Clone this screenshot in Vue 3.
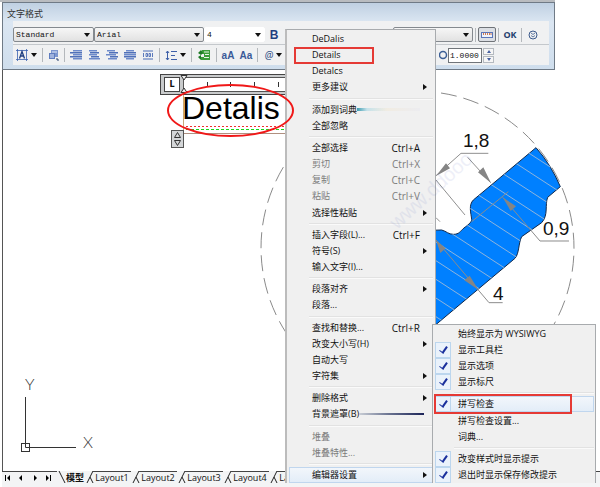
<script setup>
import { ref } from 'vue'

const menu = [
  { t: 'DeDalis' },
  { t: 'Details', mark: true },
  { t: 'Detalcs' },
  { t: '更多建议', sub: true },
  { sep: true },
  { t: '添加到词典', smear: 'teal' },
  { t: '全部忽略' },
  { sep: true },
  { t: '全部选择', k: 'Ctrl+A' },
  { t: '剪切', k: 'Ctrl+X', off: true },
  { t: '复制', k: 'Ctrl+C', off: true },
  { t: '粘贴', k: 'Ctrl+V', off: true },
  { t: '选择性粘贴', sub: true },
  { sep: true },
  { t: '插入字段(L)...', k: 'Ctrl+F' },
  { t: '符号(S)', sub: true },
  { t: '输入文字(I)...' },
  { sep: true },
  { t: '段落对齐', sub: true },
  { t: '段落...' },
  { sep: true },
  { t: '查找和替换...', k: 'Ctrl+R' },
  { t: '改变大小写(H)', sub: true },
  { t: '自动大写' },
  { t: '字符集', sub: true },
  { sep: true },
  { t: '删除格式', sub: true },
  { t: '背景遮罩(B)', smear: 'navy' },
  { sep: true },
  { t: '堆叠', off: true },
  { t: '堆叠特性...', off: true },
  { sep: true },
  { t: '编辑器设置', sub: true, hot: true },
]

const settings = ref([
  { t: '始终显示为 WYSIWYG', check: true, on: false },
  { t: '显示工具栏', check: true, on: true },
  { t: '显示选项', check: true, on: true },
  { t: '显示标尺', check: true, on: true },
  { sep: true },
  { t: '拼写检查', check: true, on: true, hot: true, mark: true },
  { t: '拼写检查设置...' },
  { t: '词典...' },
  { sep: true },
  { t: '改变样式时显示提示', check: true, on: true },
  { t: '退出时显示保存修改提示', check: true, on: true },
])

const aligns = [
  { name: '左对齐', w: [[4, 9], [1, 12], [4, 9], [1, 12], [4, 9]] },
  { name: '居中', w: [[2, 8], [3, 9], [2, 8], [4, 8], [2, 11]] },
  { name: '右对齐', w: [[2, 8], [4, 9], [1, 10], [5, 8], [3, 9]] },
  { name: '两端对齐', w: [[3, 8], [1, 12], [1, 12], [1, 12], [3, 8]] },
]

const hatch = Array.from({ length: 13 }, (_, i) => 649 - i * 56)
const layouts = ['Layout1', 'Layout2', 'Layout3', 'Layout4', 'Layout5']
const word = ref('Detalis')
const ratio = ref('1.0000')
</script>

<template>
  <main class="app">
    <section class="format" aria-label="文字格式">
      <h1 class="title">文字格式</h1>
      <div class="panel">
        <div class="bar top">
          <span class="drop style"><select aria-label="样式"><option>Standard</option></select></span>
          <span class="drop font"><select aria-label="字体"><option>Arial</option></select></span>
          <span class="drop size"><select aria-label="字高"><option>4</option></select></span>
          <button class="tool bold" aria-label="加粗">B</button>
          <span class="drop color"><select aria-label="颜色"><option></option></select></span>
          <i class="vr"></i>
          <button class="tool ruler-on" aria-label="标尺">
            <svg width="12" height="8" viewBox="0 0 12 8"><rect x=".5" y="1.5" width="11" height="5" fill="#eef3fc" stroke="#5b76b8" /><path d="M2.5 2v2M4.5 2v2M6.5 2v2M8.5 2v2M10 2v2" stroke="#d07a50" /></svg>
          </button>
          <i class="vr"></i>
          <button class="tool ok">OK</button>
          <i class="vr"></i>
          <button class="tool more" aria-label="选项">
            <svg width="10" height="10" viewBox="0 0 10 10" fill="none" stroke="#3c5a8c"><circle cx="5" cy="5" r="4" /><path d="M3 3l2 1.500 2-1.500M3 5.500l2 1.500 2-1.500" stroke-width=".8" /></svg>
          </button>
        </div>
        <div class="bar low">
          <button class="tool wide" aria-label="栏">
            <svg width="12" height="12" viewBox="0 0 12 12" fill="none" stroke="#3a62b0"><path d="M1.500 0v12M10.500 0v12M0 1.500h12M0 10.500h12" stroke-width=".8" /><path d="M3.500 9.500l2.500-7 2.500 7M4.300 7h3.400" stroke="#1f3f80" stroke-width="1.300" /></svg><b class="tri"></b>
          </button>
          <i class="vr"></i>
          <button class="tool para" aria-label="多行文字对正">
            <svg width="12" height="12" viewBox="0 0 12 12"><path d="M3 1h7v7H3z" fill="#7c96cf" /><path d="M1 4h6v6H1z" fill="#5f7dc0" /><path d="M2 6h4M2 8h4M4 3h5" stroke="#dfe8fa" /><path d="M9 9v2h2" stroke="#27406f" fill="none" /></svg>
          </button>
          <i class="vr"></i>
          <button v-for="a in aligns" :key="a.name" class="tool" :aria-label="a.name">
            <svg width="14" height="11" viewBox="0 0 14 11">
              <rect v-for="(l, i) in a.w" :key="i" :x="l[0]" :y="i * 2" :width="l[1]" height="1.500" :fill="i % 2 ? '#4f70b8' : '#6c8acb'" />
            </svg>
          </button>
          <button class="tool" aria-label="分布">
            <svg width="12" height="10" viewBox="0 0 12 10" fill="none" stroke="#4b6cb5"><path d="M1 1h10M1 9h10" /><path d="M1.500 3v4M10.500 3v4M4 3.500h1.500v3H4zM7 3.500h1.500v3H7z" stroke-width=".9" /></svg>
          </button>
          <i class="vr"></i>
          <button class="tool wide" aria-label="行距">
            <svg width="12" height="11" viewBox="0 0 12 11" fill="none" stroke="#3d5fa8"><path d="M2.500 1v9M1 3l1.500-2L4 3M1 8l1.500 2L4 8M6 1.500h6M6 5.500h4M6 9.500h6" /></svg><b class="tri"></b>
          </button>
          <i class="vr"></i>
          <button class="tool field-btn" aria-label="插入字段">
            <svg width="13" height="12" viewBox="0 0 13 12"><path d="M4 1h8v10H3V8h3V5H3z" fill="#3a9c3a" /><path d="M6 3h5M7 5.500h4M6 8.500h5" stroke="#e6f6e4" /><path d="M0 4l3-3 2 3-2 2zM0 8l3-2v5z" fill="#1c7a25" /></svg>
          </button>
          <i class="vr"></i>
          <button class="tool case">aA</button>
          <button class="tool case">Aa</button>
          <i class="vr"></i>
          <button class="tool wide at">@<b class="tri"></b></button>
          <span class="ratio">
            <svg width="9" height="10" viewBox="0 0 9 10"><circle cx="4" cy="5" r="3.500" fill="none" stroke="#3c5f96" stroke-width="1.500" /></svg>
            <input v-model="ratio" aria-label="宽度因子" />
            <span class="steps">
              <button aria-label="增大"><b class="tri up"></b></button>
              <button aria-label="减小"><b class="tri dn"></b></button>
            </span>
          </span>
        </div>
      </div>
    </section>

    <section class="canvas" aria-label="图纸">
      <svg class="drawing" width="100%" height="100%">
        <g transform="translate(-3 -70)">
          <path d="M441 93A156.500 156.500 0 1 1 394 93" fill="none" stroke="#8a8a8a" stroke-dasharray="16 7" />
          <g transform="translate(420 90) scale(.33333)" fill="none" stroke="#8f8f8f" stroke-width="3">
            <clipPath id="body"><path d="M348 173Q392 222 421 290L383 322C374 345 386 375 365 398L305 440C295 460 298 490 285 505L50 702L0 740V440Q30 418 65 420C80 424 85 433 100 433C118 433 120 424 132 414C142 406 155 398 155 388C153 370 145 345 160 330Z" /></clipPath>
            <path d="M348 173Q392 222 421 290L383 322C374 345 386 375 365 398L305 440C295 460 298 490 285 505L50 702L0 740V440Q30 418 65 420C80 424 85 433 100 433C118 433 120 424 132 414C142 406 155 398 155 388C153 370 145 345 160 330Z" fill="#0080ff" stroke="#10284a" />
            <g clip-path="url(#body)" stroke="#8fb4dc">
              <path v-for="c in hatch" :key="c" :d="`M0 ${c}L440 ${c + 286}`" />
            </g>
            <path d="M48 257L123 190H205M143 202L212 278M48 270L135 375M48 383L60 395" />
            <path d="M155 395L265 305M248 322L360 453H447M48 450L207 638H248" stroke="#8c8c8c" />
            <g fill="#858585" stroke="none">
              <path d="M48 258L78 220L90 235ZM213 279L174 247L190 232ZM248 322L272 363L288 349ZM175 599L133 571L149 557ZM48 450L61 489L77 475Z" />
            </g>
          </g>
          <g class="dims">
            <text x="463" y="147">1,8</text>
            <text x="543" y="235">0,9</text>
            <text x="493" y="300">4</text>
          </g>
          <g fill="none" stroke="#333">
            <path d="M25.500 397V447.500H76" />
            <rect x="21.500" y="443.500" width="8" height="8" />
          </g>
          <g class="axes">
            <text x="25" y="390">Y</text>
            <text x="83" y="448">X</text>
          </g>
        </g>
      </svg>

      <div class="editor">
        <div class="ruler">
          <button class="tab-kind" aria-label="制表符">L</button>
          <div class="scale">
            <svg width="100%" height="13"><path d="M23.500 4v5M46.500 4v5M70.500 4v5M94.500 4v5" stroke="#333" /></svg>
            <svg class="indent" width="8" height="20" viewBox="0 0 8 20" fill="#eee" stroke="#333"><path d="M1 1.500h6L4 6zM1 18.500h6L4 14z" /></svg>
          </div>
        </div>
        <div class="field">
          <input v-model="word" aria-label="文字内容" spellcheck="false" />
          <i class="dash red"></i>
          <i class="dash green"></i>
        </div>
        <button class="height-grip" aria-label="高度">
          <svg width="11" height="16" viewBox="0 0 11 16" fill="none" stroke="#333"><path d="M2.500 6.500h6l-3-5zM2.500 9.500h6l-3 5z" /></svg>
        </button>
      </div>
    </section>

    <footer class="tabs">
      <div class="nav">
        <button aria-label="第一个"><svg width="6" height="6"><path d="M0 0h1v6H0zM5 0v6L2 3z" /></svg></button>
        <button aria-label="上一个"><svg width="6" height="6"><path d="M4 0v6L1 3z" /></svg></button>
        <button aria-label="下一个"><svg width="6" height="6"><path d="M2 0v6l3-3z" /></svg></button>
        <button aria-label="最后一个"><svg width="6" height="6"><path d="M5 0h1v6H5zM1 0v6l3-3z" /></svg></button>
      </div>
      <svg class="cut" width="8" height="13" fill="none" stroke="#222"><path d="M1 0l6 12" /></svg>
      <button class="sheet active">模型</button>
      <template v-for="l in layouts" :key="l">
        <svg class="cut" width="8" height="13" fill="none" stroke="#222"><path d="M7 0L1 12M4 6l3 6" /></svg>
        <button class="sheet">{{ l }}</button>
      </template>
      <div class="rest"></div>
    </footer>

    <div class="menu main" role="menu">
      <template v-for="(m, i) in menu" :key="i">
        <hr v-if="m.sep" />
        <button v-else class="item" :class="{ hot: m.hot }" role="menuitem" :disabled="m.off">
          <span>{{ m.t }}</span>
          <i v-if="m.smear" class="smear" :class="m.smear"></i>
          <kbd v-if="m.k">{{ m.k }}</kbd>
          <b v-if="m.sub" class="tri side"></b>
          <i v-if="m.mark" class="mark"></i>
        </button>
      </template>
    </div>

    <div class="menu sub" role="menu">
      <template v-for="(m, i) in settings" :key="i">
        <hr v-if="m.sep" />
        <label v-else-if="m.check" class="item" :class="{ hot: m.hot }">
          <input v-model="m.on" type="checkbox" /><span>{{ m.t }}</span>
          <i v-if="m.mark" class="mark"></i>
        </label>
        <button v-else class="item" role="menuitem"><span>{{ m.t }}</span></button>
      </template>
    </div>

    <svg class="watermark" width="130" height="120" aria-hidden="true">
      <text transform="translate(12 112) rotate(-42)">www.ddooo</text>
    </svg>
    <i class="ring"></i>
  </main>
</template>

<style>
body {
  margin: 0;
  background: #fff;
}
</style>

<style scoped>
.app {
  position: relative;
  display: flex;
  flex-direction: column;
  height: 100vh;
  overflow: hidden;
  box-sizing: border-box;
  padding: 2px 0 0 2px;
  font-family: "Open Sans", "Noto Sans CJK SC", sans-serif;
  font-size: 9px;
  line-height: 12px;
  color: #111;
}
.app::before {
  content: "";
  position: absolute;
  inset: 0 45px auto 0;
  height: 2px;
  background: #b9bcc0;
}
button, input, select {
  font: inherit;
  color: inherit;
  margin: 0;
  padding: 0;
  border: 0;
  background: none;
  border-radius: 0;
  box-sizing: border-box;
}
svg {
  display: block;
  flex: none;
}

/* floating format toolbar */
.format {
  flex: none;
  margin-right: 45px;
  padding: 0 5px 4px 10px;
  border: 1px solid #6f7a86;
  background: linear-gradient(#bfd0e2, #dbe6f2 19px, #cfdeed);
}
.title {
  margin: 0 0 0 -6px;
  height: 18px;
  line-height: 22px;
  font-size: 9px;
  font-weight: 400;
  color: #333;
}
.panel {
  background: #f0f1f2;
}
.bar {
  display: flex;
  align-items: center;
}
.top {
  height: 24px;
  padding-top: 4px;
  box-sizing: border-box;
  border-bottom: 1px solid #c4c8cc;
}
.low {
  height: 20px;
}
.drop {
  position: relative;
  height: 15px;
  box-sizing: border-box;
  border: 1px solid #84898e;
  border-radius: 2px;
  background: linear-gradient(#f6f6f6, #e2e2e2);
}
.drop::after {
  content: "";
  position: absolute;
  right: 3px;
  top: 5px;
  border: 3px solid transparent;
  border-top: 4px solid #111;
  border-bottom: 0;
  pointer-events: none;
}
.drop select {
  display: block;
  width: 100%;
  height: 13px;
  padding-left: 2px;
  appearance: none;
  font: 8px/12px "Liberation Mono", monospace;
}
.style { width: 81px; }
.font { width: 110px; }
.size {
  width: 61px;
  border-color: #fff;
  background: #fff;
}
.color {
  width: 80px;
  margin-left: auto;
}
.vr {
  width: 1px;
  height: 14px;
  margin: 0 2px;
  background: #b4b8bc;
}
.tool {
  display: flex;
  flex: none;
  align-items: center;
  justify-content: center;
  width: 18px;
  height: 15px;
}
.bold {
  font: bold 12px "Liberation Sans", sans-serif;
  color: #1f3f80;
}
.ruler-on {
  border: 1px solid #6f7378;
  border-radius: 2px;
  background: #dcdfe4;
}
.ok {
  font-weight: 700;
  color: #24406e;
}
.more {
  margin-right: 7px;
}
.wide {
  width: 27px;
  gap: 3px;
}
.para {
  width: 17px;
}
.field-btn {
  width: 20px;
}
.case {
  font: bold 10px "Liberation Sans", sans-serif;
  color: #3a5a98;
}
.at {
  font-size: 10px;
  font-style: italic;
  color: #2c4c84;
}
.tri {
  border: 3px solid transparent;
  border-top: 4px solid #111;
  border-bottom: 0;
}
.ratio {
  display: flex;
  align-items: center;
  margin: 0 55px 0 auto;
}
.ratio input {
  width: 34px;
  height: 15px;
  padding-left: 1px;
  border: 1px solid #70757a;
  background: #fff;
  font: 8px/12px "Liberation Mono", monospace;
}
.steps {
  display: grid;
  gap: 1px;
  margin-left: 1px;
}
.steps button {
  display: grid;
  place-items: center;
  width: 11px;
  height: 7px;
  border: 1px solid #b5bac0;
  background: #f6f6f6;
}
.tri.up, .tri.dn {
  border: 2px solid transparent;
}
.tri.up {
  border-bottom: 3px solid #4660a0;
  border-top: 0;
}
.tri.dn {
  border-top: 3px solid #4660a0;
  border-bottom: 0;
}

/* drawing area */
.canvas {
  position: relative;
  flex: 1;
  min-height: 0;
  border-left: 1px solid #555;
  background: #fff;
}
.drawing {
  position: absolute;
  inset: 0;
}
.dims {
  font: 19px "Liberation Sans", Arial, sans-serif;
  fill: #111;
}
.axes {
  font: 300 16px Lato, sans-serif;
  fill: #333;
}
.editor {
  position: absolute;
  left: 157px;
  top: 4px;
  width: 140px;
}
.ruler {
  display: flex;
  align-items: center;
  gap: 4px;
  height: 21px;
  padding-left: 3px;
  box-sizing: border-box;
  border: 1px solid #444;
  border-width: 1px 0 1px 1px;
  background: #c9cbcc;
}
.tab-kind {
  width: 16px;
  height: 15px;
  border: 1px solid #444;
  background: #fff;
  font: bold 8px "DejaVu Sans", sans-serif;
}
.scale {
  position: relative;
  flex: 1;
  height: 13px;
  background: #fff;
  outline: 1px solid #555;
}
.indent {
  position: absolute;
  left: -4px;
  top: -4px;
}
.field {
  position: relative;
  margin-left: 23px;
  height: 39px;
  box-sizing: border-box;
  border-left: 1px solid #c8a878;
  border-bottom: 1px solid #b09080;
}
.field input {
  display: block;
  width: 100%;
  height: 27px;
  padding: 0;
  margin-left: -2px;
  font: 32px/27px "Liberation Sans", Arial, sans-serif;
  color: #000;
}
.dash {
  position: absolute;
  left: 2px;
  right: 0;
  height: 1px;
}
.red {
  bottom: 6px;
  background: repeating-linear-gradient(90deg, #f03030 0 2px, transparent 2px 4px);
}
.green {
  bottom: 3px;
  background: repeating-linear-gradient(90deg, #18d818 0 3px, transparent 3px 5px);
}
.height-grip {
  position: absolute;
  left: 11px;
  top: 56px;
  width: 13px;
  height: 18px;
  border: 1px solid #555;
  background: #d4d6d8;
}

/* sheet tabs */
.tabs {
  display: flex;
  flex: none;
  align-items: flex-start;
  height: 16px;
  overflow: hidden;
  background: #f3f4f5;
}
.nav {
  display: flex;
  justify-content: space-between;
  width: 55px;
  height: 13px;
  padding: 0 6px 0 3px;
  box-sizing: border-box;
  border-top: 1px solid #444;
}
.nav button {
  width: 6px;
}
.cut {
  margin: 0 -1px 0 1px;
}
.sheet {
  flex: none;
  height: 13px;
  width: 38px;
  border-top: 1px solid #444;
  line-height: 12px;
}
.active {
  width: 20px;
  font-weight: 700;
  border-color: transparent;
}
.rest {
  flex: 1;
  border-top: 1px solid #444;
}

/* context menus */
.menu {
  position: absolute;
  bottom: 4px;
  display: flex;
  flex-direction: column;
  justify-content: space-between;
  box-sizing: border-box;
  border: 1px solid #a8abae;
  border-bottom: 0;
  background: #f0f0f0;
}
.main {
  left: 285px;
  top: 29px;
  width: 151px;
  padding: 1px 2px 0;
  border-left: 2px solid #bcbcbc;
}
.sub {
  left: 432px;
  top: 324px;
  width: 164px;
  padding: 1px 1px 0;
}
.menu hr {
  flex: none;
  width: auto;
  height: 2px;
  margin: 2px 0 2px 20px;
  border: 0;
  background: #fafafa;
  border-top: 1px solid #e2e2e2;
  box-sizing: border-box;
}
.item {
  position: relative;
  display: flex;
  align-items: center;
  flex: none;
  height: 16px;
  padding: 0 12px 0 23px;
  white-space: nowrap;
  border: 1px solid transparent;
  box-sizing: border-box;
  text-align: left;
}
.main .item {
  padding-left: 22px;
}
.item:disabled {
  color: #7c7c7c;
}
.hot {
  border-color: #c0d6ee;
  background: linear-gradient(#f2f6fb, #e3edf8);
}
kbd {
  margin-left: auto;
  font: inherit;
  font-size: 10px;
}
.side {
  position: absolute;
  right: 5px;
  border: 3px solid transparent;
  border-left: 4px solid #111;
  border-right: 0;
}
.item input {
  position: absolute;
  left: 0;
  top: -1px;
  width: 16px;
  height: 16px;
  appearance: none;
}
.item input:checked {
  border: 1px solid #bcd6ee;
  background: #eaf2fb;
}
.item input:checked::before {
  content: "";
  position: absolute;
  left: 5px;
  top: 2px;
  width: 3px;
  height: 7px;
  border: solid #1a2f9c;
  border-width: 0 2px 1px 0;
  transform: rotate(35deg);
}
.mark {
  position: absolute;
  left: 4px;
  top: -1px;
  width: 80px;
  height: 17px;
  box-sizing: border-box;
  border: 2px solid #e53a35;
}
.sub .mark {
  left: -1px;
  top: -3px;
  width: 138px;
  height: 20px;
}
.smear {
  flex: 1;
}
.teal {
  height: 3px;
  background: linear-gradient(90deg, #3d9cb0, #c6e2ea 10px, #f1ece2 30px, #ececf0);
}
.navy {
  height: 2px;
  margin-right: -4px;
  background: linear-gradient(90deg, #c9ced6, #6a7390 30px, #1c2458);
}
.watermark {
  position: absolute;
  left: 385px;
  top: 118px;
  pointer-events: none;
  font: 20px "Liberation Sans", sans-serif;
  fill: #6070c0;
  opacity: .1;
}
.ring {
  position: absolute;
  left: 167px;
  top: 84px;
  width: 127px;
  height: 53px;
  box-sizing: border-box;
  border: 2px solid #f01818;
  border-radius: 50%;
  pointer-events: none;
}
</style>
